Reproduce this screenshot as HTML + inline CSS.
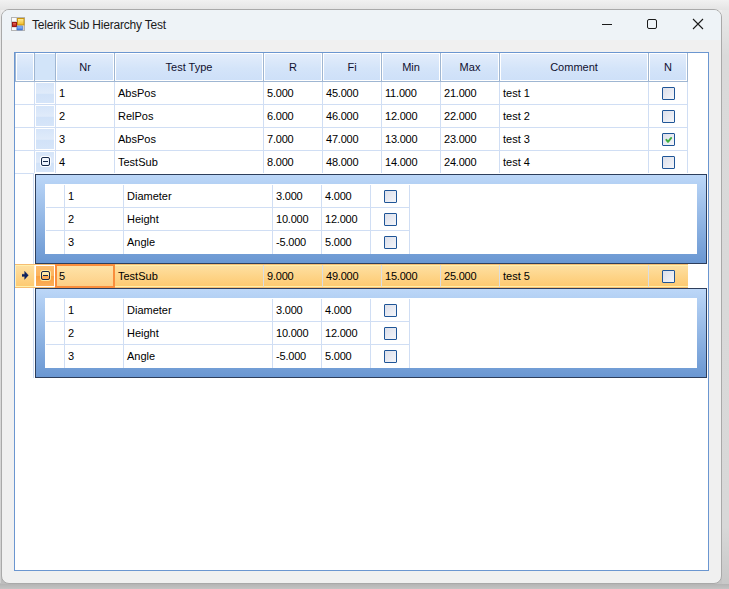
<!DOCTYPE html><html><head><meta charset="utf-8"><style>
html,body{margin:0;padding:0;}
body{width:729px;height:589px;overflow:hidden;position:relative;background:#e9e9e9;font-family:"Liberation Sans", sans-serif;}
div{position:absolute;box-sizing:border-box;}
.t{white-space:nowrap;font-size:11px;line-height:13px;color:#000;}
.hd{white-space:nowrap;font-size:11px;line-height:13px;color:#101030;text-align:center;}
</style></head><body>
<div style="left:0;top:0;width:729px;height:589px;background:linear-gradient(#f0f0f0,#e8e8e8 5%,#dedede 60%,#d2d2d2);"></div>
<div style="left:0;top:0;width:729px;height:10px;background:linear-gradient(#f1f1f1,#e4e4e4);"></div>
<div style="left:0;top:575px;width:12px;height:14px;background:#bdbdbd;"></div>
<div style="left:711px;top:575px;width:18px;height:14px;background:#c4c4c4;"></div>
<div style="left:0;top:584px;width:729px;height:5px;background:linear-gradient(#b4b4b4,#c4c4c4);"></div>
<div style="left:722px;top:10px;width:7px;height:574px;background:linear-gradient(#e9e9e9,#dadada 8%,#d8d8d8 90%,#c8c8c8);"></div>
<div style="left:0;top:10px;width:1px;height:573px;background:linear-gradient(#e8e8e8,#d0d0d0);"></div>
<div style="left:1px;top:9px;width:721px;height:575px;border:1px solid #a9a9a9;border-radius:8px;background:#f0f0f0;overflow:hidden;"><div style="left:0;top:0;width:719px;height:30px;background:#eef3f7;"></div></div>
<svg style="position:absolute;left:10px;top:16px" width="16" height="16" viewBox="0 0 16 16"><defs><linearGradient id="gy" x1="0" y1="0" x2="0" y2="1"><stop offset="0" stop-color="#fff0a0"/><stop offset="1" stop-color="#f0b820"/></linearGradient><linearGradient id="gr" x1="0" y1="0" x2="0" y2="1"><stop offset="0" stop-color="#f07060"/><stop offset="1" stop-color="#b01810"/></linearGradient><linearGradient id="gb" x1="0" y1="0" x2="0" y2="1"><stop offset="0" stop-color="#9cc4ff"/><stop offset="1" stop-color="#3f7be0"/></linearGradient></defs><rect x="1.5" y="1.5" width="13" height="13" fill="#fbfbfb" stroke="#b4b4b4"/><line x1="2" y1="5.5" x2="6" y2="5.5" stroke="#d4d4d4"/><line x1="2" y1="11.5" x2="6" y2="11.5" stroke="#e0e0e0"/><line x1="6.5" y1="2" x2="6.5" y2="14" stroke="#d4d4d4"/><line x1="13.5" y1="10" x2="13.5" y2="14" stroke="#d4d4d4"/><rect x="2.5" y="6.5" width="4" height="4" fill="url(#gr)" stroke="#9a1a14"/><rect x="7.5" y="2.5" width="6.5" height="6.5" fill="url(#gy)" stroke="#c89410"/><rect x="7" y="10" width="5.5" height="4" fill="url(#gb)" stroke="#3a6cc8" stroke-width="0.6"/></svg>
<div class="t" style="left:32px;top:18px;font-size:12px;line-height:15px;color:#1b1b1b;letter-spacing:-0.2px;">Telerik Sub Hierarchy Test</div>
<svg style="position:absolute;left:590px;top:10px" width="130" height="30" viewBox="0 0 130 30"><line x1="12" y1="14.5" x2="22" y2="14.5" stroke="#1a1a1a" stroke-width="1"/><rect x="57.5" y="9.5" width="9" height="9" rx="1.5" fill="none" stroke="#1a1a1a" stroke-width="1"/><path d="M103 9 L113 19 M113 9 L103 19" stroke="#1a1a1a" stroke-width="1.1"/></svg>
<div style="left:14px;top:52px;width:695px;height:519px;border:1px solid #6b96d0;background:#fff;"></div>
<div style="left:15px;top:53px;width:1px;height:28px;background:#9fb6d2;"></div>
<div style="left:16px;top:53px;width:18px;height:28px;border:1px solid #fff;background:linear-gradient(#e3edfb,#d4e4f9 55%,#cee0f8);"></div>
<div style="left:34px;top:53px;width:1px;height:28px;background:#9fb6d2;"></div>
<div style="left:35px;top:53px;width:20px;height:28px;border-top:1px solid #fff;border-bottom:1px solid #fff;background:#d2e4f9;"></div>
<div style="left:55px;top:53px;width:1px;height:28px;background:#9fb6d2;"></div>
<div style="left:56px;top:53px;width:58px;height:28px;border:1px solid #fff;background:linear-gradient(#e3edfb,#d4e4f9 55%,#cee0f8);"></div>
<div style="left:114px;top:53px;width:1px;height:28px;background:#9fb6d2;"></div>
<div class="hd" style="left:56px;top:61px;width:58px;">Nr</div>
<div style="left:115px;top:53px;width:148px;height:28px;border:1px solid #fff;background:linear-gradient(#e3edfb,#d4e4f9 55%,#cee0f8);"></div>
<div style="left:263px;top:53px;width:1px;height:28px;background:#9fb6d2;"></div>
<div class="hd" style="left:115px;top:61px;width:148px;">Test Type</div>
<div style="left:264px;top:53px;width:58px;height:28px;border:1px solid #fff;background:linear-gradient(#e3edfb,#d4e4f9 55%,#cee0f8);"></div>
<div style="left:322px;top:53px;width:1px;height:28px;background:#9fb6d2;"></div>
<div class="hd" style="left:264px;top:61px;width:58px;">R</div>
<div style="left:323px;top:53px;width:58px;height:28px;border:1px solid #fff;background:linear-gradient(#e3edfb,#d4e4f9 55%,#cee0f8);"></div>
<div style="left:381px;top:53px;width:1px;height:28px;background:#9fb6d2;"></div>
<div class="hd" style="left:323px;top:61px;width:58px;">Fi</div>
<div style="left:382px;top:53px;width:58px;height:28px;border:1px solid #fff;background:linear-gradient(#e3edfb,#d4e4f9 55%,#cee0f8);"></div>
<div style="left:440px;top:53px;width:1px;height:28px;background:#9fb6d2;"></div>
<div class="hd" style="left:382px;top:61px;width:58px;">Min</div>
<div style="left:441px;top:53px;width:58px;height:28px;border:1px solid #fff;background:linear-gradient(#e3edfb,#d4e4f9 55%,#cee0f8);"></div>
<div style="left:499px;top:53px;width:1px;height:28px;background:#9fb6d2;"></div>
<div class="hd" style="left:441px;top:61px;width:58px;">Max</div>
<div style="left:500px;top:53px;width:148px;height:28px;border:1px solid #fff;background:linear-gradient(#e3edfb,#d4e4f9 55%,#cee0f8);"></div>
<div style="left:648px;top:53px;width:1px;height:28px;background:#9fb6d2;"></div>
<div class="hd" style="left:500px;top:61px;width:148px;">Comment</div>
<div style="left:649px;top:53px;width:38px;height:28px;border:1px solid #fff;background:linear-gradient(#e3edfb,#d4e4f9 55%,#cee0f8);"></div>
<div style="left:687px;top:53px;width:1px;height:28px;background:#9fb6d2;"></div>
<div class="hd" style="left:649px;top:61px;width:38px;">N</div>
<div style="left:15px;top:81px;width:673px;height:1px;background:#9fb6d2;"></div>
<div style="left:15px;top:104px;width:673px;height:1px;background:#d0def4;"></div>
<div style="left:34px;top:82px;width:1px;height:22px;background:#d0def4;"></div>
<div style="left:55px;top:82px;width:1px;height:22px;background:#d0def4;"></div>
<div style="left:114px;top:82px;width:1px;height:22px;background:#d0def4;"></div>
<div style="left:263px;top:82px;width:1px;height:22px;background:#d0def4;"></div>
<div style="left:322px;top:82px;width:1px;height:22px;background:#d0def4;"></div>
<div style="left:381px;top:82px;width:1px;height:22px;background:#d0def4;"></div>
<div style="left:440px;top:82px;width:1px;height:22px;background:#d0def4;"></div>
<div style="left:499px;top:82px;width:1px;height:22px;background:#d0def4;"></div>
<div style="left:648px;top:82px;width:1px;height:22px;background:#d0def4;"></div>
<div style="left:687px;top:82px;width:1px;height:22px;background:#d0def4;"></div>
<div style="left:35px;top:82px;width:20px;height:22px;border:1px solid #fff;background:linear-gradient(#d6e5f9 0%,#e0ebfa 52%,#d1e2f8 54%,#d6e5f9 100%);"></div>
<div class="t" style="left:59px;top:87px;">1</div>
<div class="t" style="left:118px;top:87px;">AbsPos</div>
<div class="t" style="left:267px;top:87px;letter-spacing:-0.2px;">5.000</div>
<div class="t" style="left:326px;top:87px;letter-spacing:-0.2px;">45.000</div>
<div class="t" style="left:385px;top:87px;letter-spacing:-0.2px;">11.000</div>
<div class="t" style="left:444px;top:87px;letter-spacing:-0.2px;">21.000</div>
<div class="t" style="left:503px;top:87px;">test 1</div>
<div style="left:662px;top:87px;width:13px;height:13px;border:1px solid #1f5597;border-radius:1px;background:linear-gradient(135deg,#dcdfea,#f4f5f9);"></div>
<div style="left:15px;top:127px;width:673px;height:1px;background:#d0def4;"></div>
<div style="left:34px;top:105px;width:1px;height:22px;background:#d0def4;"></div>
<div style="left:55px;top:105px;width:1px;height:22px;background:#d0def4;"></div>
<div style="left:114px;top:105px;width:1px;height:22px;background:#d0def4;"></div>
<div style="left:263px;top:105px;width:1px;height:22px;background:#d0def4;"></div>
<div style="left:322px;top:105px;width:1px;height:22px;background:#d0def4;"></div>
<div style="left:381px;top:105px;width:1px;height:22px;background:#d0def4;"></div>
<div style="left:440px;top:105px;width:1px;height:22px;background:#d0def4;"></div>
<div style="left:499px;top:105px;width:1px;height:22px;background:#d0def4;"></div>
<div style="left:648px;top:105px;width:1px;height:22px;background:#d0def4;"></div>
<div style="left:687px;top:105px;width:1px;height:22px;background:#d0def4;"></div>
<div style="left:35px;top:105px;width:20px;height:22px;border:1px solid #fff;background:linear-gradient(#d6e5f9 0%,#e0ebfa 52%,#d1e2f8 54%,#d6e5f9 100%);"></div>
<div class="t" style="left:59px;top:110px;">2</div>
<div class="t" style="left:118px;top:110px;">RelPos</div>
<div class="t" style="left:267px;top:110px;letter-spacing:-0.2px;">6.000</div>
<div class="t" style="left:326px;top:110px;letter-spacing:-0.2px;">46.000</div>
<div class="t" style="left:385px;top:110px;letter-spacing:-0.2px;">12.000</div>
<div class="t" style="left:444px;top:110px;letter-spacing:-0.2px;">22.000</div>
<div class="t" style="left:503px;top:110px;">test 2</div>
<div style="left:662px;top:110px;width:13px;height:13px;border:1px solid #1f5597;border-radius:1px;background:linear-gradient(135deg,#dcdfea,#f4f5f9);"></div>
<div style="left:15px;top:150px;width:673px;height:1px;background:#d0def4;"></div>
<div style="left:34px;top:128px;width:1px;height:22px;background:#d0def4;"></div>
<div style="left:55px;top:128px;width:1px;height:22px;background:#d0def4;"></div>
<div style="left:114px;top:128px;width:1px;height:22px;background:#d0def4;"></div>
<div style="left:263px;top:128px;width:1px;height:22px;background:#d0def4;"></div>
<div style="left:322px;top:128px;width:1px;height:22px;background:#d0def4;"></div>
<div style="left:381px;top:128px;width:1px;height:22px;background:#d0def4;"></div>
<div style="left:440px;top:128px;width:1px;height:22px;background:#d0def4;"></div>
<div style="left:499px;top:128px;width:1px;height:22px;background:#d0def4;"></div>
<div style="left:648px;top:128px;width:1px;height:22px;background:#d0def4;"></div>
<div style="left:687px;top:128px;width:1px;height:22px;background:#d0def4;"></div>
<div style="left:35px;top:128px;width:20px;height:22px;border:1px solid #fff;background:linear-gradient(#d6e5f9 0%,#e0ebfa 52%,#d1e2f8 54%,#d6e5f9 100%);"></div>
<div class="t" style="left:59px;top:133px;">3</div>
<div class="t" style="left:118px;top:133px;">AbsPos</div>
<div class="t" style="left:267px;top:133px;letter-spacing:-0.2px;">7.000</div>
<div class="t" style="left:326px;top:133px;letter-spacing:-0.2px;">47.000</div>
<div class="t" style="left:385px;top:133px;letter-spacing:-0.2px;">13.000</div>
<div class="t" style="left:444px;top:133px;letter-spacing:-0.2px;">23.000</div>
<div class="t" style="left:503px;top:133px;">test 3</div>
<div style="left:662px;top:133px;width:13px;height:13px;border:1px solid #1f5597;border-radius:1px;background:linear-gradient(135deg,#dcdfea,#f4f5f9);"><svg style="position:absolute;left:0;top:0" width="11" height="11" viewBox="0 0 11 11"><path d="M3.4 5.8 L5 7.8 L8.2 3.9" fill="none" stroke="#3fae3f" stroke-width="1.9" stroke-linejoin="round" stroke-linecap="round"/></svg></div>
<div style="left:15px;top:173px;width:19px;height:1px;background:#d0def4;"></div>
<div style="left:34px;top:151px;width:1px;height:22px;background:#d0def4;"></div>
<div style="left:55px;top:151px;width:1px;height:22px;background:#d0def4;"></div>
<div style="left:114px;top:151px;width:1px;height:22px;background:#d0def4;"></div>
<div style="left:263px;top:151px;width:1px;height:22px;background:#d0def4;"></div>
<div style="left:322px;top:151px;width:1px;height:22px;background:#d0def4;"></div>
<div style="left:381px;top:151px;width:1px;height:22px;background:#d0def4;"></div>
<div style="left:440px;top:151px;width:1px;height:22px;background:#d0def4;"></div>
<div style="left:499px;top:151px;width:1px;height:22px;background:#d0def4;"></div>
<div style="left:648px;top:151px;width:1px;height:22px;background:#d0def4;"></div>
<div style="left:687px;top:151px;width:1px;height:22px;background:#d0def4;"></div>
<div style="left:35px;top:151px;width:20px;height:22px;border:1px solid #fff;background:linear-gradient(#d6e5f9 0%,#e0ebfa 52%,#d1e2f8 54%,#d6e5f9 100%);"></div>
<div class="t" style="left:59px;top:156px;">4</div>
<div class="t" style="left:118px;top:156px;">TestSub</div>
<div class="t" style="left:267px;top:156px;letter-spacing:-0.2px;">8.000</div>
<div class="t" style="left:326px;top:156px;letter-spacing:-0.2px;">48.000</div>
<div class="t" style="left:385px;top:156px;letter-spacing:-0.2px;">14.000</div>
<div class="t" style="left:444px;top:156px;letter-spacing:-0.2px;">24.000</div>
<div class="t" style="left:503px;top:156px;">test 4</div>
<div style="left:662px;top:156px;width:13px;height:13px;border:1px solid #1f5597;border-radius:1px;background:linear-gradient(135deg,#dcdfea,#f4f5f9);"></div>
<div style="left:41px;top:157px;width:9px;height:9px;border:1px solid #16294a;border-radius:2px;background:linear-gradient(#f4f8fe,#e8f0fb);box-shadow:0 0 0 1px rgba(255,255,255,0.95);"></div>
<div style="left:43px;top:161px;width:5px;height:1px;background:#16294a;"></div>
<div style="left:33px;top:174px;width:1px;height:90px;background:#d0def4;"></div>
<div style="left:35px;top:174px;width:672px;height:90px;border:1px solid #2d3e5c;background:linear-gradient(#bcd7f8,#6a97d2);"></div>
<div style="left:45px;top:184px;width:652px;height:70px;background:#fff;"></div>
<div style="left:46px;top:207px;width:364px;height:1px;background:#d0def4;"></div>
<div style="left:64px;top:185px;width:1px;height:22px;background:#d0def4;"></div>
<div style="left:123px;top:185px;width:1px;height:22px;background:#d0def4;"></div>
<div style="left:272px;top:185px;width:1px;height:22px;background:#d0def4;"></div>
<div style="left:321px;top:185px;width:1px;height:22px;background:#d0def4;"></div>
<div style="left:370px;top:185px;width:1px;height:22px;background:#d0def4;"></div>
<div style="left:409px;top:185px;width:1px;height:22px;background:#d0def4;"></div>
<div class="t" style="left:68px;top:190px;">1</div>
<div class="t" style="left:127px;top:190px;">Diameter</div>
<div class="t" style="left:276px;top:190px;letter-spacing:-0.2px;">3.000</div>
<div class="t" style="left:325px;top:190px;letter-spacing:-0.2px;">4.000</div>
<div style="left:384px;top:190px;width:13px;height:13px;border:1px solid #1f5597;border-radius:1px;background:linear-gradient(135deg,#dcdfea,#f4f5f9);"></div>
<div style="left:46px;top:230px;width:364px;height:1px;background:#d0def4;"></div>
<div style="left:64px;top:208px;width:1px;height:22px;background:#d0def4;"></div>
<div style="left:123px;top:208px;width:1px;height:22px;background:#d0def4;"></div>
<div style="left:272px;top:208px;width:1px;height:22px;background:#d0def4;"></div>
<div style="left:321px;top:208px;width:1px;height:22px;background:#d0def4;"></div>
<div style="left:370px;top:208px;width:1px;height:22px;background:#d0def4;"></div>
<div style="left:409px;top:208px;width:1px;height:22px;background:#d0def4;"></div>
<div class="t" style="left:68px;top:213px;">2</div>
<div class="t" style="left:127px;top:213px;">Height</div>
<div class="t" style="left:276px;top:213px;letter-spacing:-0.2px;">10.000</div>
<div class="t" style="left:325px;top:213px;letter-spacing:-0.2px;">12.000</div>
<div style="left:384px;top:213px;width:13px;height:13px;border:1px solid #1f5597;border-radius:1px;background:linear-gradient(135deg,#dcdfea,#f4f5f9);"></div>
<div style="left:64px;top:231px;width:1px;height:23px;background:#d0def4;"></div>
<div style="left:123px;top:231px;width:1px;height:23px;background:#d0def4;"></div>
<div style="left:272px;top:231px;width:1px;height:23px;background:#d0def4;"></div>
<div style="left:321px;top:231px;width:1px;height:23px;background:#d0def4;"></div>
<div style="left:370px;top:231px;width:1px;height:23px;background:#d0def4;"></div>
<div style="left:409px;top:231px;width:1px;height:23px;background:#d0def4;"></div>
<div class="t" style="left:68px;top:236px;">3</div>
<div class="t" style="left:127px;top:236px;">Angle</div>
<div class="t" style="left:276px;top:236px;letter-spacing:-0.2px;">-5.000</div>
<div class="t" style="left:325px;top:236px;letter-spacing:-0.2px;">5.000</div>
<div style="left:384px;top:236px;width:13px;height:13px;border:1px solid #1f5597;border-radius:1px;background:linear-gradient(135deg,#dcdfea,#f4f5f9);"></div>
<div style="left:15px;top:264px;width:673px;height:24px;border-top:1px solid #f6bd72;border-bottom:1px solid #f6bd72;background:linear-gradient(#fff0ad,#fff0ad 1px,#fedfa0 1px,#fdca72 21px,#fff0a8 21px,#fff0a8);"></div>
<div style="left:15px;top:265px;width:1px;height:22px;background:#fff0c0;"></div>
<div style="left:34px;top:265px;width:1px;height:22px;background:#fff6e0;"></div>
<div style="left:35px;top:265px;width:20px;height:22px;border:1px solid #fff;background:linear-gradient(#fdbd6e 0%,#fcb25c 48%,#f9a040 52%,#fbae58 100%);"></div>
<div style="left:55px;top:264px;width:60px;height:24px;border:2px solid #f98d3c;background:linear-gradient(#fee3a8,#fdcf86);"></div>
<div style="left:263px;top:265px;width:1px;height:22px;background:#d9dde3;"></div>
<div style="left:322px;top:265px;width:1px;height:22px;background:#d9dde3;"></div>
<div style="left:381px;top:265px;width:1px;height:22px;background:#d9dde3;"></div>
<div style="left:440px;top:265px;width:1px;height:22px;background:#d9dde3;"></div>
<div style="left:499px;top:265px;width:1px;height:22px;background:#d9dde3;"></div>
<div style="left:648px;top:265px;width:1px;height:22px;background:#d9dde3;"></div>
<svg style="position:absolute;left:22px;top:271px" width="7" height="9" viewBox="0 0 7 9"><path d="M0 3.2 H2.6 V0.2 L6.4 4.2 L2.6 8.4 V5.4 H0 Z" fill="#0d2260" stroke="#0d2260" stroke-width="0.3" stroke-linejoin="round"/></svg>
<div class="t" style="left:59px;top:270px;">5</div>
<div class="t" style="left:118px;top:270px;">TestSub</div>
<div class="t" style="left:267px;top:270px;letter-spacing:-0.2px;">9.000</div>
<div class="t" style="left:326px;top:270px;letter-spacing:-0.2px;">49.000</div>
<div class="t" style="left:385px;top:270px;letter-spacing:-0.2px;">15.000</div>
<div class="t" style="left:444px;top:270px;letter-spacing:-0.2px;">25.000</div>
<div class="t" style="left:503px;top:270px;">test 5</div>
<div style="left:662px;top:270px;width:13px;height:13px;border:1px solid #1f5597;border-radius:1px;background:linear-gradient(135deg,#dcdfea,#f4f5f9);"></div>
<div style="left:41px;top:271px;width:9px;height:9px;border:1px solid #16294a;border-radius:2px;background:linear-gradient(#ffeeb0 0%,#ffe39a 50%,#fbaa50 51%,#fbb060 100%);box-shadow:0 0 0 1px rgba(255,240,170,0.9);"></div>
<div style="left:43px;top:275px;width:5px;height:1px;background:#16294a;"></div>
<div style="left:33px;top:288px;width:1px;height:90px;background:#d0def4;"></div>
<div style="left:35px;top:288px;width:672px;height:90px;border:1px solid #2d3e5c;background:linear-gradient(#bcd7f8,#6a97d2);"></div>
<div style="left:45px;top:298px;width:652px;height:70px;background:#fff;"></div>
<div style="left:46px;top:321px;width:364px;height:1px;background:#d0def4;"></div>
<div style="left:64px;top:299px;width:1px;height:22px;background:#d0def4;"></div>
<div style="left:123px;top:299px;width:1px;height:22px;background:#d0def4;"></div>
<div style="left:272px;top:299px;width:1px;height:22px;background:#d0def4;"></div>
<div style="left:321px;top:299px;width:1px;height:22px;background:#d0def4;"></div>
<div style="left:370px;top:299px;width:1px;height:22px;background:#d0def4;"></div>
<div style="left:409px;top:299px;width:1px;height:22px;background:#d0def4;"></div>
<div class="t" style="left:68px;top:304px;">1</div>
<div class="t" style="left:127px;top:304px;">Diameter</div>
<div class="t" style="left:276px;top:304px;letter-spacing:-0.2px;">3.000</div>
<div class="t" style="left:325px;top:304px;letter-spacing:-0.2px;">4.000</div>
<div style="left:384px;top:304px;width:13px;height:13px;border:1px solid #1f5597;border-radius:1px;background:linear-gradient(135deg,#dcdfea,#f4f5f9);"></div>
<div style="left:46px;top:344px;width:364px;height:1px;background:#d0def4;"></div>
<div style="left:64px;top:322px;width:1px;height:22px;background:#d0def4;"></div>
<div style="left:123px;top:322px;width:1px;height:22px;background:#d0def4;"></div>
<div style="left:272px;top:322px;width:1px;height:22px;background:#d0def4;"></div>
<div style="left:321px;top:322px;width:1px;height:22px;background:#d0def4;"></div>
<div style="left:370px;top:322px;width:1px;height:22px;background:#d0def4;"></div>
<div style="left:409px;top:322px;width:1px;height:22px;background:#d0def4;"></div>
<div class="t" style="left:68px;top:327px;">2</div>
<div class="t" style="left:127px;top:327px;">Height</div>
<div class="t" style="left:276px;top:327px;letter-spacing:-0.2px;">10.000</div>
<div class="t" style="left:325px;top:327px;letter-spacing:-0.2px;">12.000</div>
<div style="left:384px;top:327px;width:13px;height:13px;border:1px solid #1f5597;border-radius:1px;background:linear-gradient(135deg,#dcdfea,#f4f5f9);"></div>
<div style="left:64px;top:345px;width:1px;height:23px;background:#d0def4;"></div>
<div style="left:123px;top:345px;width:1px;height:23px;background:#d0def4;"></div>
<div style="left:272px;top:345px;width:1px;height:23px;background:#d0def4;"></div>
<div style="left:321px;top:345px;width:1px;height:23px;background:#d0def4;"></div>
<div style="left:370px;top:345px;width:1px;height:23px;background:#d0def4;"></div>
<div style="left:409px;top:345px;width:1px;height:23px;background:#d0def4;"></div>
<div class="t" style="left:68px;top:350px;">3</div>
<div class="t" style="left:127px;top:350px;">Angle</div>
<div class="t" style="left:276px;top:350px;letter-spacing:-0.2px;">-5.000</div>
<div class="t" style="left:325px;top:350px;letter-spacing:-0.2px;">5.000</div>
<div style="left:384px;top:350px;width:13px;height:13px;border:1px solid #1f5597;border-radius:1px;background:linear-gradient(135deg,#dcdfea,#f4f5f9);"></div>
</body></html>
